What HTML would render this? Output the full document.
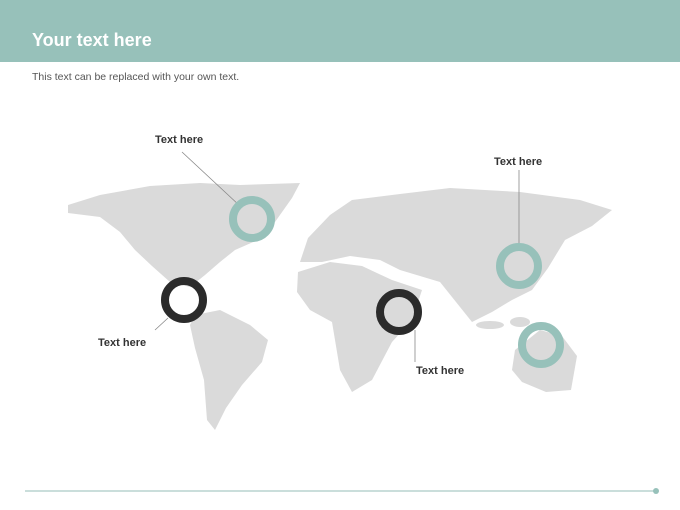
<!DOCTYPE html>
<html><head><meta charset="utf-8"><style>
body{margin:0;width:680px;height:510px;background:#fff;font-family:"Liberation Sans",sans-serif;overflow:hidden;position:relative}
.hd{position:absolute;left:0;top:0;width:680px;height:62px;background:#97c1ba}
.hd h1{position:absolute;left:32px;top:30px;margin:0;color:#fff;font-size:18px;font-weight:bold}
.sub{position:absolute;left:32px;top:71px;font-size:10.5px;color:#555}
.lb{position:absolute;font-size:11px;font-weight:bold;color:#333}
</style></head><body>
<div class="hd"><h1>Your text here</h1></div>
<div class="sub">This text can be replaced with your own text.</div>
<svg width="680" height="510" style="position:absolute;left:0;top:0">
<g fill="#dadada">
<polygon points="68,205 100,195 150,186 200,183 240,185 300,183 292,198 275,222 258,240 235,250 220,262 205,275 190,287 170,282 152,266 135,250 120,232 100,217 68,213"/>
<polygon points="195,315 220,310 250,325 268,340 262,362 242,385 226,408 215,430 207,420 204,380 195,348 190,325"/>
<polygon points="300,262 308,238 330,215 352,200 400,194 450,188 520,192 580,200 612,210 592,226 565,240 548,268 532,290 512,300 492,312 472,322 456,302 440,282 420,276 400,270 380,260 350,256 322,262"/>
<polygon points="298,272 330,262 362,266 392,280 422,290 412,320 392,342 372,380 352,392 340,370 332,322 310,310 297,292"/>
<polygon points="515,350 540,330 562,336 577,356 571,390 546,392 522,382 512,370"/>
<ellipse cx="490" cy="325" rx="14" ry="4"/><ellipse cx="520" cy="322" rx="10" ry="5"/><ellipse cx="505" cy="290" rx="4" ry="8"/>
</g>
<g stroke="#888" stroke-width="0.8" fill="none">
<line x1="182" y1="152" x2="240" y2="206"/><line x1="519" y1="170" x2="519" y2="246"/>
<line x1="415" y1="330" x2="415" y2="362"/><line x1="168" y1="318" x2="155" y2="330"/>
</g>
<g fill="none" stroke-width="8">
<circle cx="252" cy="219" r="19" stroke="#97c1ba"/>
<circle cx="184" cy="300" r="19" stroke="#2b2b2b"/>
<circle cx="399" cy="312" r="19" stroke="#2b2b2b"/>
<circle cx="519" cy="266" r="19" stroke="#97c1ba"/>
<circle cx="541" cy="345" r="19" stroke="#97c1ba"/>
</g>
<line x1="25" y1="491" x2="655" y2="491" stroke="#b8d3cf" stroke-width="1.5"/>
<circle cx="656" cy="491" r="3" fill="#97c1ba"/>
</svg>
<div class="lb" style="left:155px;top:134px">Text here</div>
<div class="lb" style="left:494px;top:156px">Text here</div>
<div class="lb" style="left:98px;top:337px">Text here</div>
<div class="lb" style="left:416px;top:365px">Text here</div>
</body></html>
